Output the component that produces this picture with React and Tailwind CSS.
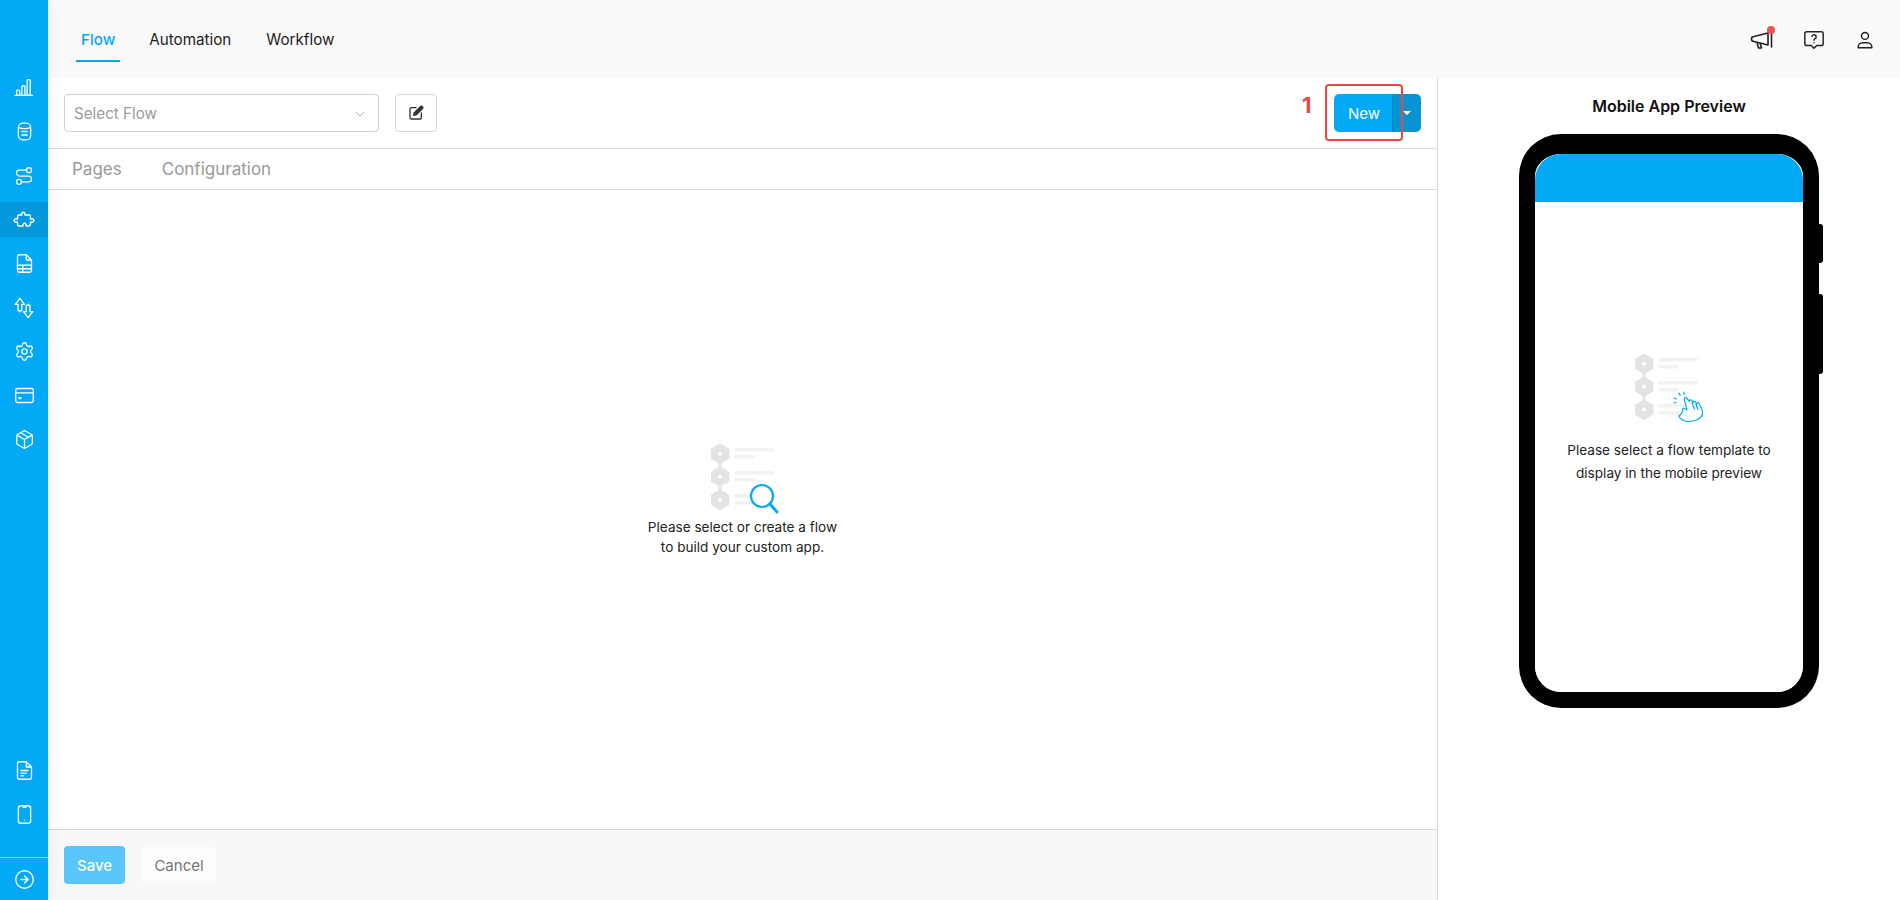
import React from "react";
import { Route, Settings, Package, ChevronDown, CircleArrowRight } from "lucide-react";

const I = ({ children, size = 20 }) => (
  <svg width={size} height={size} viewBox="0 0 24 24" fill="none" stroke="currentColor" strokeWidth="1.5" strokeLinecap="round" strokeLinejoin="round">{children}</svg>
);

const Bars = () => (<I size={21}><path d="M1 21h20" /><rect x="3" y="15" width="3.500" height="6" rx="1" /><rect x="9" y="10" width="3.500" height="11" rx="1" /><rect x="15" y="3" width="3.500" height="18" rx="1" /></I>);
const Db = () => (<I size={21}><rect x="5" y="2.500" width="14" height="19" rx="5" /><path d="M5.500 7.500c3 1.500 10 1.500 13 0M9 12h6M9 16h6" /></I>);
const Puzzle = () => (<I size={22}><path d="M6.500 6.500h3.200v-.4a1.800 1.800 0 1 1 3.300 0v.4h4.500a1.500 1.500 0 0 1 1.500 1.500v3h.6a1.900 1.900 0 1 1 0 3H19v3a1.500 1.500 0 0 1-1.500 1.500H14.300v-.4a1.800 1.800 0 1 0-3.300 0v.4H6.500A1.500 1.500 0 0 1 5 17.500V14h-.6a1.900 1.900 0 1 1 0-3H5V8a1.500 1.500 0 0 1 1.500-1.500Z" /></I>);
const Sheet = () => (<I size={21}><path d="M6 2h8l6 6v12a2 2 0 0 1-2 2H6a2 2 0 0 1-2-2V4a2 2 0 0 1 2-2Z" /><path d="M14 2v6h6M4 14h16M4 18h16M10 14v8" /></I>);
const Swap = () => (<I size={22}><path d="M7.500 1.500 2.500 8h3v7h4V8h3Z" /><path d="M16.500 22.500l5-6.500h-3V9h-4v7h-3Z" /></I>);
const Card = () => (<I size={21}><rect x="2" y="4" width="20" height="16" rx="2" /><path d="M2 9h20" /><path d="M6 15h1.500" strokeWidth="2.400" /></I>);
const Doc = () => (<I size={21}><path d="M6 2h8l6 6v12a2 2 0 0 1-2 2H6a2 2 0 0 1-2-2V4a2 2 0 0 1 2-2Z" /><path d="M14 2v6h6M8 12h8M8 15h6M8 18h3" /></I>);
const Phone = () => (<I size={21}><rect x="5" y="2" width="14" height="20" rx="3" /><path d="M10 3.500h4M12 18.500h.01" /></I>);
const Edit = () => (
  <svg width="16" height="16" viewBox="0 0 24 24" fill="none" stroke="#333" strokeWidth="2" strokeLinecap="round" strokeLinejoin="round">
    <path d="M12 4H5a2 2 0 0 0-2 2v13a2 2 0 0 0 2 2h13a2 2 0 0 0 2-2v-7" />
    <path d="M18.500 2.500a2.100 2.100 0 0 1 3 3L12.500 14.500l-4 1 1-4Z" fill="#333" />
  </svg>
);
const Horn = () => (
  <svg width="24" height="24" viewBox="0 0 24 24" fill="none" stroke="#222" strokeWidth="1.600" strokeLinecap="round" strokeLinejoin="round">
    <path d="M4 8.500 18 5v12L4 13.500a2.500 2.500 0 0 1 0-5Z" />
    <path d="M21.500 4v15M7 14.500l1.500 5.500h3l-1.300-4.500" />
  </svg>
);
const Chat = () => (
  <svg width="22" height="22" viewBox="0 0 24 24" fill="none" stroke="#222" strokeWidth="1.600" strokeLinecap="round" strokeLinejoin="round">
    <path d="M4 3h16a2 2 0 0 1 2 2v11a2 2 0 0 1-2 2h-5l-3 3-3-3H4a2 2 0 0 1-2-2V5a2 2 0 0 1 2-2Z" />
    <path d="M9.800 8.200a2.300 2.300 0 1 1 3.400 2.300c-.8.500-1.200 1-1.200 1.800M12 15h.01" />
  </svg>
);
const Person = () => (
  <svg width="22" height="22" viewBox="0 0 24 24" fill="none" stroke="#222" strokeWidth="1.600" strokeLinecap="round" strokeLinejoin="round">
    <circle cx="12" cy="7.500" r="3.800" />
    <path d="M4.500 20.500v-.5a5 5 0 0 1 5-5h5a5 5 0 0 1 5 5v.5Z" />
  </svg>
);

const Item = ({ children, active }) => (
  <div className={`h-[35px] w-full flex items-center justify-center text-white ${active ? "bg-[#0398dc]" : ""}`}>{children}</div>
);

const Flowchart = ({ children }) => (
  <svg width="72" height="72" viewBox="0 0 72 72" fill="none" className="block">
    <path d="M9 4v50" stroke="#e3e3e3" strokeWidth="3" />
    {[0, 23, 46].map((y) => (
      <g key={y} transform={`translate(0 ${y})`}>
        <path d="M9 -.5 18.500 5v9.500L9 20l-9.500-5.500V5Z" fill="#e3e3e3" />
        <circle cx="9" cy="9.700" r="1.900" fill="#fff" />
      </g>
    ))}
    {[[4, 63], [11, 44], [27, 63], [34, 44], [50, 50], [57, 50]].map(([y, x2]) => (
      <rect key={y} x="23" y={y} width={x2 - 23} height="3.400" rx="1.700" fill="#f2f2f2" />
    ))}
    {children}
  </svg>
);

export default function App() {
  return (
    <div className="flex h-screen w-full overflow-hidden bg-white font-[Inter,sans-serif] text-[#222]">
      <aside className="relative z-10 w-[48px] shrink-0 flex flex-col items-center bg-[#03a9f4] shadow-[0_0_16px_rgba(0,0,0,0.07)]">
        <div className="flex w-full flex-col gap-[9px] pt-[70px]">
          <Item><Bars /></Item>
          <Item><Db /></Item>
          <Item><Route size={20} strokeWidth={1.5} /></Item>
          <Item active><Puzzle /></Item>
          <Item><Sheet /></Item>
          <Item><Swap /></Item>
          <Item><Settings size={21} strokeWidth={1.5} /></Item>
          <Item><Card /></Item>
          <Item><Package size={21} strokeWidth={1.5} /></Item>
        </div>
        <div className="mt-auto flex w-full flex-col gap-[9px] pb-[25px]">
          <Item><Doc /></Item>
          <Item><Phone /></Item>
        </div>
        <div className="flex h-[43px] w-full items-center justify-center border-t border-white/50 text-white">
          <CircleArrowRight size={21} strokeWidth={1.5} />
        </div>
      </aside>

      <div className="flex min-w-0 flex-1 flex-col">
        <header className="flex h-[78px] shrink-0 items-start justify-between bg-[#fafafa] pl-[28px] pr-[24px]">
          <nav className="flex gap-[25px] text-[15.200px] leading-[24px]">
            <div className="-mr-[1px] border-b-2 border-[#03a9f4] px-[5px] pb-[8px] pt-[28px] font-medium text-[#03a9f4]">Flow</div>
            <div className="border-b-2 border-transparent px-[5px] pb-[8px] pt-[28px]">Automation</div>
            <div className="border-b-2 border-transparent px-[5px] pb-[8px] pt-[28px]">Workflow</div>
          </nav>
          <div className="flex items-center gap-[29px] pt-[28px]">
            <div className="relative -ml-[2px]">
              <Horn />
              <span className="absolute -right-[1px] -top-[2px] h-[8px] w-[8px] rounded-full bg-[#ef5350]" />
            </div>
            <Chat />
            <Person />
          </div>
        </header>

        <div className="flex min-h-0 flex-1">
          <main className="flex w-[1390px] shrink-0 flex-col border-r border-[#d9d9d9]">
            <div className="flex h-[71px] shrink-0 items-center border-b border-[#d9d9d9] pl-[16px] pr-[16px]">
              <div className="flex h-[38px] w-[315px] items-center justify-between rounded-[4px] border border-[#cfcfcf] bg-white pl-[9px] pr-[10px] pt-[2px] text-[15.200px] text-[#9b9b9b]">
                <span>Select Flow</span>
                <ChevronDown size={16} strokeWidth={1.2} className="text-[#8f8f8f]" />
              </div>
              <div className="ml-[16px] flex h-[38px] w-[42px] items-center justify-center rounded-[4px] border border-[#d6d6d6] bg-white">
                <Edit />
              </div>
              <div className="relative ml-auto flex h-[38px] w-[87px] rounded-[5px] text-white">
                <div className="flex w-[58px] items-center justify-center rounded-l-[5px] bg-[#03a9f4] pl-[2px] pt-[2px] text-[15px]">New</div>
                <div className="flex flex-1 items-center justify-center rounded-r-[5px] border-l border-[#0386c3] bg-[#0794d3]">
                  <span className="h-0 w-0 border-x-[4px] border-t-[4px] border-x-transparent border-t-white" />
                </div>
                <div className="absolute -left-[9px] -top-[10px] h-[57px] w-[78px] rounded-[4px] border-[2.500px] border-[#ef4444]" />
                <span className="absolute -left-[32px] -top-[4px] text-[22px] font-bold leading-[30px] text-[#ef4444]">1</span>
              </div>
            </div>
            <div className="flex h-[41px] shrink-0 items-center gap-[40px] border-b border-[#d9d9d9] pl-[24px] pt-[1px] text-[17px] text-[#999]">
              <span>Pages</span>
              <span>Configuration</span>
            </div>
            <div className="flex min-h-0 flex-1 flex-col items-center justify-center pb-[18px]">
              <div className="ml-[8px]">
                <Flowchart>
                  <circle cx="51" cy="52" r="11" fill="#fff" stroke="#03a9f4" strokeWidth="2.200" />
                  <path d="M59 60l7 8" stroke="#03a9f4" strokeWidth="3" strokeLinecap="round" />
                </Flowchart>
              </div>
              <p className="mt-[1px] text-center text-[13.600px] leading-[20px] text-[#222]">
                Please select or create a flow<br />to build your custom app.
              </p>
            </div>
            <footer className="flex h-[71px] shrink-0 items-center gap-[17px] border-t border-[#d9d9d9] bg-[#f7f8fa] pl-[16px]">
              <button className="h-[38px] w-[61px] rounded-[4px] bg-[#5ac5f8] pt-[2px] text-[15px] font-medium text-white">Save</button>
              <button className="h-[36px] w-[74px] rounded-[4px] bg-[#fdfdfd] pt-[2px] text-[15px] text-[#757575]">Cancel</button>
            </footer>
          </main>

          <section className="flex flex-1 flex-col items-center">
            <h2 className="mt-[18px] text-[16px] font-semibold leading-[20px] text-[#111]">Mobile App Preview</h2>
            <div className="relative mt-[18px] h-[574px] w-[300px] rounded-[42px] border-x-[16px] border-b-[16px] border-t-[20px] border-black">
              <div className="absolute -right-[20px] top-[70px] h-[39px] w-[8px] rounded-r-[3px] bg-black" />
              <div className="absolute -right-[20px] top-[140px] h-[80px] w-[8px] rounded-r-[3px] bg-black" />
              <div className="flex h-full w-full flex-col overflow-hidden rounded-[26px] bg-white">
                <div className="h-[48px] shrink-0 bg-[#03a9f4]" />
                <div className="flex flex-col items-center pt-[152px]">
                  <div className="ml-[4px]">
                    <Flowchart>
                      <g stroke="#03a9f4" strokeWidth="1.200" strokeLinecap="round" strokeLinejoin="round" fill="#fff">
                        <path d="M45 61.500c-1-.6-1.500 .5-.8 1.600C47 66 50 68 54 67.500c6 0 12.500-3 13.500-7.500 .8-3.500-1.500-7-3.500-10.500-.9-1.400-2.700-.7-2.500 1l-.9-2.500c-.9-1.400-2.800-.7-2.600 1l-.9-2.400c-.9-1.300-2.700-.8-2.600 .9L52 44.500c-.7-1.500-3-1-2.800 .7L52 56l-2.500-1.500c-2-1-2.500 1-1.500 2.500Z" />
                        <path d="M57 49l2.500 6M61 50.500l2 5" fill="none" />
                        <path d="M44 39l1.200 2.500M39 44l2.500 1M49 38v2.500M39 49l2-.6" fill="none" />
                      </g>
                    </Flowchart>
                  </div>
                  <p className="mt-[13px] text-center text-[13.600px] leading-[23px] text-[#222]">
                    Please select a flow template to<br />display in the mobile preview
                  </p>
                </div>
              </div>
            </div>
          </section>
        </div>
      </div>
    </div>
  );
}
